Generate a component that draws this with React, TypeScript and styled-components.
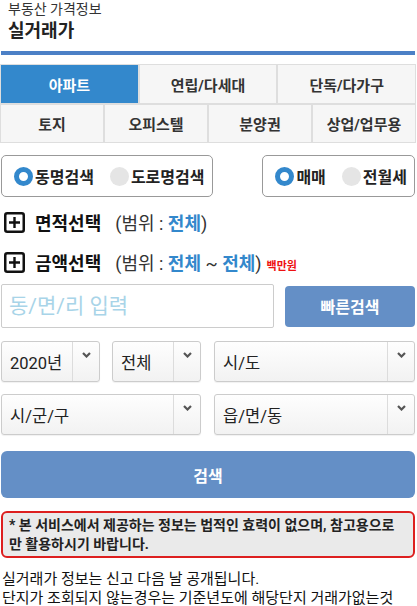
import * as React from 'react';
import styled, { createGlobalStyle } from 'styled-components';

const GlobalStyle = createGlobalStyle`
	body {
		margin: 0;
		background: #fff;
		font-family: Roboto, "Noto Sans CJK KR", "Noto Sans", sans-serif;
		color: #222;
	}
	* {
		box-sizing: border-box;
	}
`;

const BLUE = '#3388cc';
const SOFT_BLUE = '#648fc6';

const Page = styled.div`
	padding: 0 2px 0 1px;
	height: 606px;
	overflow: hidden;
`;

const Header = styled.div`
	padding-left: 7px;
`;

const SubTitle = styled.div`
	font-size: 14px;
	line-height: 18px;
	color: #333;
`;

const Title = styled.h1`
	margin: 0;
	font-size: 18px;
	line-height: 26px;
	font-weight: bold;
	color: #222;
`;

const BlueRule = styled.div`
	margin-top: 7px;
	height: 4px;
	background: #4c80c6;
`;

const TabBox = styled.div`
	margin: 9px -1px 0 -1px;
	padding: 1px;
	background: #dedede;
	display: flex;
	flex-direction: column;
	gap: 2px;
`;

const TabRow = styled.div<{ $cols: number }>`
	display: grid;
	grid-template-columns: repeat(${props => props.$cols}, 1fr);
	gap: 2px;
	height: ${props => (props.$cols === 3 ? 38 : 37)}px;
`;

const Tab = styled.div<{ $active?: boolean }>`
	display: flex;
	align-items: center;
	justify-content: center;
	font-size: 15px;
	font-weight: bold;
	background: ${props => (props.$active ? BLUE : '#f6f6f6')};
	color: ${props => (props.$active ? '#fff' : '#333')};
`;

const RadioRow = styled.div`
	margin-top: 12px;
	display: flex;
	justify-content: space-between;
`;

const RadioBox = styled.div`
	height: 42px;
	display: flex;
	align-items: center;
	gap: 16px;
	padding: 0 7px 0 12px;
	border: 1px solid #999;
	border-radius: 5px;
`;

const RadioOption = styled.label`
	display: flex;
	align-items: center;
	gap: 2px;
	font-size: 16px;
	font-weight: bold;
	color: #222;
`;

const RadioDot = styled.span<{ $checked?: boolean }>`
	width: 19px;
	height: 19px;
	border-radius: 50%;
	background: ${props => (props.$checked ? '#fff' : '#e5e5e5')};
	border: ${props => (props.$checked ? `5px solid ${BLUE}` : 'none')};
`;

const RangeRow = styled.div`
	margin-top: 10px;
	height: 30px;
	display: flex;
	align-items: center;
`;

const RangeLabel = styled.span`
	margin-left: 10px;
	font-size: 18px;
	font-weight: bold;
	color: #111;
`;

const RangeValue = styled.span`
	margin-left: 14px;
	font-size: 18px;
	color: #333;
`;

const Em = styled.b`
	color: ${BLUE};
`;

const Unit = styled.span`
	margin-left: 5px;
	margin-top: 5px;
	font-size: 11px;
	font-weight: bold;
	color: #ee1111;
`;

const QuickRow = styled.div`
	margin-top: 7px;
	display: flex;
	align-items: center;
	justify-content: space-between;
`;

const DongInput = styled.input`
	width: 273px;
	height: 44px;
	padding: 0 7px;
	border: 1px solid #ccc;
	border-radius: 2px;
	font-family: inherit;
	font-size: 21px;
	outline: none;
	&::placeholder {
		color: #a8d4e8;
	}
`;

const BlueButton = styled.button<{ $wide?: boolean }>`
	width: ${props => (props.$wide ? '100%' : '130px')};
	height: ${props => (props.$wide ? 47 : 41)}px;
	border: none;
	border-radius: ${props => (props.$wide ? 6 : 4)}px;
	background: ${SOFT_BLUE};
	color: #fff;
	font-family: inherit;
	font-size: 16px;
	font-weight: bold;
	padding: 0;
`;

const SelectGrid = styled.div`
	margin-top: 13px;
	display: grid;
	grid-template-columns: 200px 201px;
	column-gap: 13px;
	row-gap: 12px;
`;

const SelectPair = styled.div`
	display: grid;
	grid-template-columns: 99px 89px;
	column-gap: 12px;
`;

const Select = styled.div`
	height: 41px;
	display: flex;
	border: 1px solid #ccc;
	border-radius: 3px;
	background: linear-gradient(#fefefe, #f2f2f2);
	box-shadow: 0 1px 1px rgba(0, 0, 0, 0.06);
`;

const SelectText = styled.div`
	flex: 1;
	display: flex;
	align-items: center;
	padding-left: 8px;
	font-size: 16.5px;
	color: #222;
	white-space: nowrap;
`;

const SelectArrow = styled.div`
	width: 27px;
	border-left: 1px solid #dcdcdc;
	display: flex;
	justify-content: center;
	padding-top: 10px;
`;

const SearchWrap = styled.div`
	margin-top: 16px;
`;

const Notice = styled.div`
	margin-top: 13px;
	height: 47px;
	padding: 3px 6px;
	border: 2px solid #dd1f1f;
	border-radius: 6px;
	background: #eaeaea;
	font-size: 14px;
	line-height: 19px;
	font-weight: bold;
	color: #222;
	white-space: nowrap;
`;

const InfoText = styled.p`
	margin: 12px 0 0 1px;
	font-size: 15px;
	line-height: 19px;
	color: #111;
	word-break: keep-all;
`;

const PlusIcon = () => (
	<svg width="21" height="21" viewBox="0 0 21 21" style={{ marginLeft: 3 }}>
		<rect x="1.25" y="1.25" width="18.5" height="18.5" rx="2" fill="#fff" stroke="#111" strokeWidth="2.5" />
		<path d="M10.5 5v11M5 10.5h11" stroke="#111" strokeWidth="2.4" />
	</svg>
);

const Chevron = () => (
	<svg width="9" height="6" viewBox="0 0 9 6">
		<path d="M1 1l3.5 3.5L8 1" fill="none" stroke="#555" strokeWidth="2.2" />
	</svg>
);

const tabsTop = ['아파트', '연립/다세대', '단독/다가구'];
const tabsBottom = ['토지', '오피스텔', '분양권', '상업/업무용'];

const SelectBox = ({ label }: { label: string }) => (
	<Select>
		<SelectText>{label}</SelectText>
		<SelectArrow>
			<Chevron />
		</SelectArrow>
	</Select>
);

export default function App() {
	return (
		<Page>
			<GlobalStyle />
			<Header>
				<SubTitle>부동산 가격정보</SubTitle>
				<Title>실거래가</Title>
			</Header>
			<BlueRule />

			<TabBox>
				<TabRow $cols={3}>
					{tabsTop.map((t, i) => (
						<Tab key={t} $active={i === 0}>{t}</Tab>
					))}
				</TabRow>
				<TabRow $cols={4}>
					{tabsBottom.map(t => (
						<Tab key={t}>{t}</Tab>
					))}
				</TabRow>
			</TabBox>

			<RadioRow>
				<RadioBox>
					<RadioOption><RadioDot $checked />동명검색</RadioOption>
					<RadioOption><RadioDot />도로명검색</RadioOption>
				</RadioBox>
				<RadioBox>
					<RadioOption><RadioDot $checked />매매</RadioOption>
					<RadioOption><RadioDot />전월세</RadioOption>
				</RadioBox>
			</RadioRow>

			<RangeRow>
				<PlusIcon />
				<RangeLabel>면적선택</RangeLabel>
				<RangeValue>(범위 : <Em>전체</Em>)</RangeValue>
			</RangeRow>
			<RangeRow>
				<PlusIcon />
				<RangeLabel>금액선택</RangeLabel>
				<RangeValue>(범위 : <Em>전체</Em> ~ <Em>전체</Em>)</RangeValue>
				<Unit>백만원</Unit>
			</RangeRow>

			<QuickRow>
				<DongInput placeholder="동/면/리 입력" />
				<BlueButton>빠른검색</BlueButton>
			</QuickRow>

			<SelectGrid>
				<SelectPair>
					<SelectBox label="2020년" />
					<SelectBox label="전체" />
				</SelectPair>
				<SelectBox label="시/도" />
				<SelectBox label="시/군/구" />
				<SelectBox label="읍/면/동" />
			</SelectGrid>

			<SearchWrap>
				<BlueButton $wide>검색</BlueButton>
			</SearchWrap>

			<Notice>
				* 본 서비스에서 제공하는 정보는 법적인 효력이 없으며, 참고용으로
				<br />
				만 활용하시기 바랍니다.
			</Notice>

			<InfoText>
				실거래가 정보는 신고 다음 날 공개됩니다.
				<br />
				단지가 조회되지 않는경우는 기준년도에 해당단지 거래가없는것 입니다.
			</InfoText>
		</Page>
	);
}
